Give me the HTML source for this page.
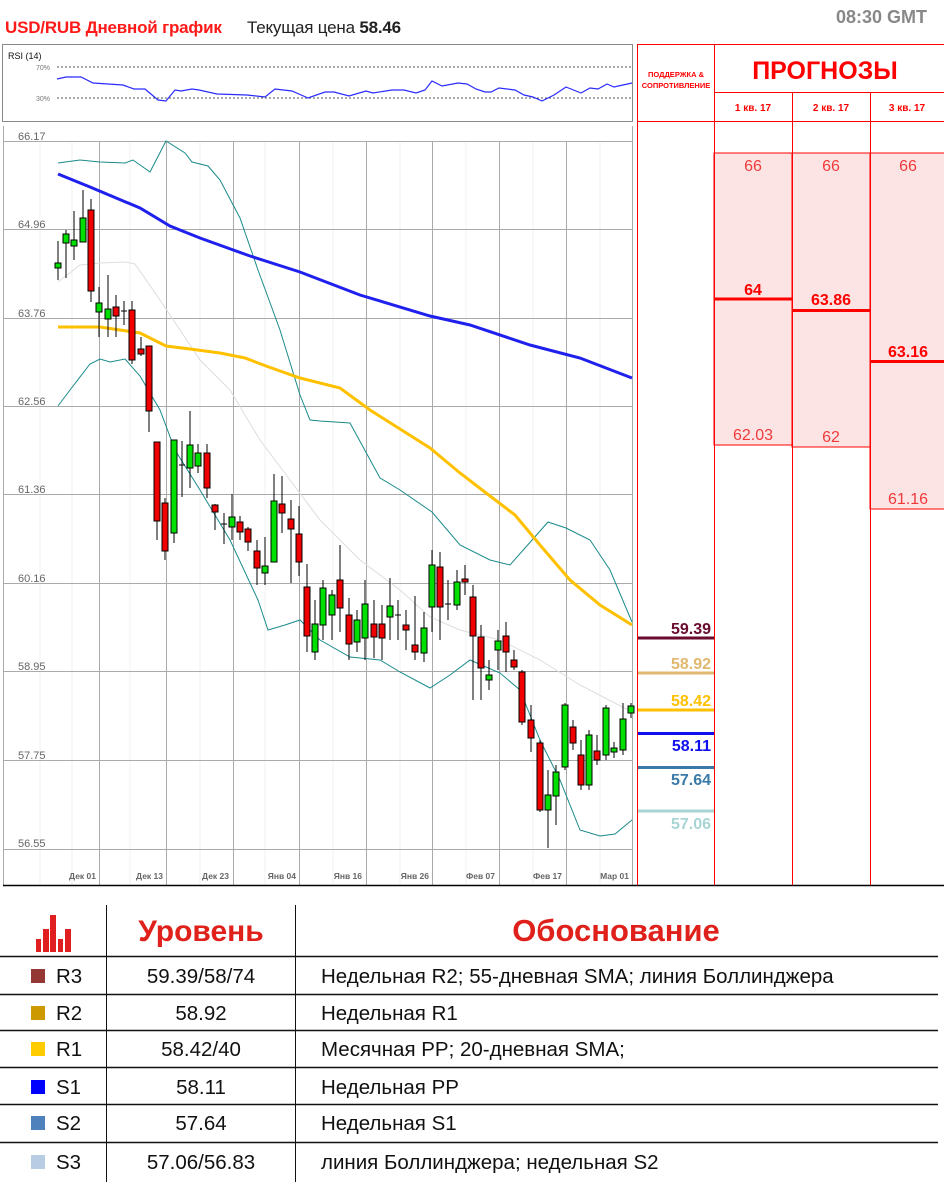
<!DOCTYPE html>
<html><head><meta charset="utf-8"><style>
body{margin:0;width:944px;height:1188px;background:#fff;position:relative;overflow:hidden;font-family:"Liberation Sans",sans-serif}
.a{position:absolute;white-space:nowrap}
</style></head><body>
<div class="a" style="left:5px;top:18px;font-size:17px;font-weight:bold;color:#ff1a1a;letter-spacing:-0.2px">USD/RUB Дневной график</div>
<div class="a" style="left:247px;top:18px;font-size:17px;color:#222;letter-spacing:-0.2px">Текущая цена <b>58.46</b></div>
<div class="a" style="left:836px;top:7px;font-size:18px;font-weight:bold;color:#888">08:30 GMT</div>

<svg class="a" style="left:0;top:0" width="944" height="1188" xmlns="http://www.w3.org/2000/svg">
<rect x="2.5" y="44.5" width="630" height="77" fill="none" stroke="#888"/>
<text x="8" y="59" font-size="9" font-family="Liberation Sans" fill="#111">RSI (14)</text>
<text x="36" y="70" font-size="7" font-family="Liberation Sans" fill="#777">70%</text>
<text x="36" y="101" font-size="7" font-family="Liberation Sans" fill="#777">30%</text>
<line x1="57" y1="67" x2="632" y2="67" stroke="#555" stroke-dasharray="2,2"/>
<line x1="57" y1="98" x2="632" y2="98" stroke="#555" stroke-dasharray="2,2"/>
<polyline fill="none" stroke="#2b2bff" stroke-width="1.2" points="57,79 66,77 81,77 93,83 123,85 134,89 145,89 158,100 166,101 175,90 181,91 192,89 199,90 217,94 247,95 265,97 275,89 292,91 308,98 325,92 334,92 349,96 366,91 373,93 392,90 404,90 416,93 425,90 432,81 442,86 458,83 467,84 476,89 485,92 491,92 499,88 515,90 524,95 533,97 542,101 554,95 566,87 581,93 590,88 598,89 607,84 614,87 623,85 632,83"/>

<g stroke="#f0f0f0"><line x1="40" y1="141" x2="40" y2="885"/><line x1="72" y1="141" x2="72" y2="885"/><line x1="130" y1="141" x2="130" y2="885"/><line x1="200" y1="141" x2="200" y2="885"/><line x1="265" y1="141" x2="265" y2="885"/><line x1="333" y1="141" x2="333" y2="885"/><line x1="400" y1="141" x2="400" y2="885"/><line x1="466" y1="141" x2="466" y2="885"/><line x1="533" y1="141" x2="533" y2="885"/><line x1="600" y1="141" x2="600" y2="885"/></g>
<g stroke="#aaa">
<line x1="3" y1="141.5" x2="632" y2="141.5"/><line x1="3" y1="229.5" x2="632" y2="229.5"/><line x1="3" y1="318.5" x2="632" y2="318.5"/><line x1="3" y1="406.5" x2="632" y2="406.5"/><line x1="3" y1="494.5" x2="632" y2="494.5"/><line x1="3" y1="583.5" x2="632" y2="583.5"/><line x1="3" y1="671.5" x2="632" y2="671.5"/><line x1="3" y1="760.5" x2="632" y2="760.5"/><line x1="3" y1="849.5" x2="632" y2="849.5"/>
<line x1="99.5" y1="141" x2="99.5" y2="885"/><line x1="166.5" y1="141" x2="166.5" y2="885"/><line x1="233.5" y1="141" x2="233.5" y2="885"/><line x1="299.5" y1="141" x2="299.5" y2="885"/><line x1="366.5" y1="141" x2="366.5" y2="885"/><line x1="432.5" y1="141" x2="432.5" y2="885"/><line x1="499.5" y1="141" x2="499.5" y2="885"/><line x1="566.5" y1="141" x2="566.5" y2="885"/><line x1="632.5" y1="126" x2="632.5" y2="885"/>
<line x1="3.5" y1="126" x2="3.5" y2="885"/>
</g>
<g font-size="11" font-family="Liberation Sans" fill="#666">
<text x="18" y="140">66.17</text><text x="18" y="228">64.96</text><text x="18" y="317">63.76</text><text x="18" y="405">62.56</text><text x="18" y="493">61.36</text><text x="18" y="582">60.16</text><text x="18" y="670">58.95</text><text x="18" y="759">57.75</text><text x="18" y="847">56.55</text>
</g>
<g font-size="8.5" font-family="Liberation Sans" font-weight="bold" fill="#666" text-anchor="end">
<text x="96" y="879">Дек 01</text><text x="163" y="879">Дек 13</text><text x="229" y="879">Дек 23</text><text x="296" y="879">Янв 04</text><text x="362" y="879">Янв 16</text><text x="429" y="879">Янв 26</text><text x="495" y="879">Фев 07</text><text x="562" y="879">Фев 17</text><text x="629" y="879">Мар 01</text>
</g>

<polyline fill="none" stroke="#ddd" stroke-width="1" points="58,282 80,265 100,263 125,262 135,264 160,300 180,330 200,360 230,390 260,440 290,480 320,520 360,560 400,590 430,617 460,630 500,640 540,660 580,685 632,712"/>
<polyline fill="none" stroke="#1a8a8a" stroke-width="1" points="58,163 80,160 100,162 125,163 133,160 150,172 166,141 185,153 192,162 208,166 220,180 240,218 258,270 280,330 300,395 310,420 320,421 350,423 380,478 400,490 432,512 460,545 490,560 510,565 525,548 548,522 566,528 590,540 610,570 632,622"/>
<polyline fill="none" stroke="#1a8a8a" stroke-width="1" points="58,406 70,390 90,364 100,359 110,362 125,359 140,376 160,410 175,450 200,490 230,540 258,600 268,630 285,625 300,620 320,640 350,657 380,660 400,672 430,688 450,675 470,660 500,673 520,690 540,740 560,780 580,830 600,836 615,834 632,820"/>
<polyline fill="none" stroke="#ffc000" stroke-width="3" points="58,327 100,327 140,333 166,346 190,349 220,353 245,358 266,366 300,378 340,388 370,410 400,429 430,448 460,473 490,496 515,515 540,545 570,580 600,605 632,625"/>
<polyline fill="none" stroke="#2020ee" stroke-width="3" points="58,174 90,187 140,208 170,226 200,238 250,256 300,272 360,295 430,316 470,325 530,345 580,358 632,378"/>

<g stroke="#000" stroke-width="1">
<line x1="58" y1="241" x2="58" y2="280"/><rect x="55" y="263" width="6" height="5" fill="#00e000"/>
<line x1="66" y1="230" x2="66" y2="278"/><rect x="63" y="234" width="6" height="9" fill="#00e000"/>
<line x1="74" y1="211" x2="74" y2="260"/><rect x="71" y="240" width="6" height="6" fill="#00e000"/>
<line x1="83" y1="190" x2="83" y2="242"/><rect x="80" y="218" width="6" height="24" fill="#00e000"/>
<line x1="91" y1="199" x2="91" y2="302"/><rect x="88" y="210" width="6" height="81" fill="#f00000"/>
<line x1="99" y1="287" x2="99" y2="337"/><rect x="96" y="303" width="6" height="9" fill="#00e000"/>
<line x1="108" y1="275" x2="108" y2="337"/><rect x="105" y="309" width="6" height="10" fill="#00e000"/>
<line x1="116" y1="295" x2="116" y2="337"/><rect x="113" y="307" width="6" height="9" fill="#f00000"/>
<line x1="124" y1="301" x2="124" y2="325"/><line x1="121" y1="311" x2="127" y2="311"/>
<line x1="132" y1="301" x2="132" y2="364"/><rect x="129" y="310" width="6" height="50" fill="#f00000"/>
<line x1="141" y1="337" x2="141" y2="356"/><rect x="138" y="349" width="6" height="5" fill="#f00000"/>
<line x1="149" y1="346" x2="149" y2="432"/><rect x="146" y="346" width="6" height="65" fill="#f00000"/>
<line x1="157" y1="442" x2="157" y2="540"/><rect x="154" y="442" width="6" height="79" fill="#f00000"/>
<line x1="165" y1="498" x2="165" y2="560"/><rect x="162" y="503" width="6" height="48" fill="#f00000"/>
<line x1="174" y1="440" x2="174" y2="543"/><rect x="171" y="440" width="6" height="93" fill="#00e000"/>
<line x1="182" y1="441" x2="182" y2="497"/><line x1="179" y1="465" x2="185" y2="465"/>
<line x1="190" y1="411" x2="190" y2="488"/><rect x="187" y="445" width="6" height="23" fill="#00e000"/>
<line x1="198" y1="444" x2="198" y2="473"/><rect x="195" y="453" width="6" height="13" fill="#00e000"/>
<line x1="207" y1="444" x2="207" y2="498"/><rect x="204" y="453" width="6" height="35" fill="#f00000"/>
<line x1="215" y1="504" x2="215" y2="530"/><rect x="212" y="505" width="6" height="7" fill="#f00000"/>
<line x1="224" y1="513" x2="224" y2="544"/><line x1="221" y1="524" x2="227" y2="524"/>
<line x1="232" y1="494" x2="232" y2="540"/><rect x="229" y="517" width="6" height="10" fill="#00e000"/>
<line x1="240" y1="516" x2="240" y2="540"/><rect x="237" y="522" width="6" height="10" fill="#f00000"/>
<line x1="248" y1="527" x2="248" y2="551"/><rect x="245" y="529" width="6" height="13" fill="#f00000"/>
<line x1="257" y1="540" x2="257" y2="585"/><rect x="254" y="551" width="6" height="17" fill="#f00000"/>
<line x1="265" y1="537" x2="265" y2="585"/><rect x="262" y="566" width="6" height="7" fill="#00e000"/>
<line x1="274" y1="474" x2="274" y2="562"/><rect x="271" y="501" width="6" height="61" fill="#00e000"/>
<line x1="282" y1="476" x2="282" y2="533"/><rect x="279" y="504" width="6" height="9" fill="#f00000"/>
<line x1="291" y1="500" x2="291" y2="583"/><rect x="288" y="519" width="6" height="10" fill="#f00000"/>
<line x1="299" y1="506" x2="299" y2="576"/><rect x="296" y="534" width="6" height="28" fill="#f00000"/>
<line x1="307" y1="564" x2="307" y2="652"/><rect x="304" y="587" width="6" height="49" fill="#f00000"/>
<line x1="315" y1="600" x2="315" y2="660"/><rect x="312" y="624" width="6" height="28" fill="#00e000"/>
<line x1="323" y1="580" x2="323" y2="640"/><rect x="320" y="588" width="6" height="37" fill="#00e000"/>
<line x1="332" y1="590" x2="332" y2="640"/><rect x="329" y="595" width="6" height="20" fill="#00e000"/>
<line x1="340" y1="545" x2="340" y2="632"/><rect x="337" y="580" width="6" height="28" fill="#f00000"/>
<line x1="349" y1="598" x2="349" y2="660"/><rect x="346" y="615" width="6" height="29" fill="#f00000"/>
<line x1="357" y1="610" x2="357" y2="652"/><rect x="354" y="620" width="6" height="22" fill="#00e000"/>
<line x1="365" y1="580" x2="365" y2="660"/><rect x="362" y="604" width="6" height="34" fill="#00e000"/>
<line x1="374" y1="600" x2="374" y2="658"/><rect x="371" y="624" width="6" height="13" fill="#f00000"/>
<line x1="382" y1="605" x2="382" y2="660"/><rect x="379" y="624" width="6" height="14" fill="#f00000"/>
<line x1="390" y1="578" x2="390" y2="640"/><rect x="387" y="606" width="6" height="11" fill="#00e000"/>
<line x1="398" y1="600" x2="398" y2="640"/><line x1="395" y1="615" x2="401" y2="615"/>
<line x1="406" y1="610" x2="406" y2="650"/><rect x="403" y="625" width="6" height="5" fill="#f00000"/>
<line x1="415" y1="596" x2="415" y2="660"/><rect x="412" y="645" width="6" height="7" fill="#f00000"/>
<line x1="424" y1="612" x2="424" y2="662"/><rect x="421" y="628" width="6" height="25" fill="#00e000"/>
<line x1="432" y1="550" x2="432" y2="632"/><rect x="429" y="565" width="6" height="42" fill="#00e000"/>
<line x1="440" y1="552" x2="440" y2="640"/><rect x="437" y="567" width="6" height="40" fill="#f00000"/>
<line x1="448" y1="580" x2="448" y2="620"/><line x1="445" y1="604" x2="451" y2="604"/>
<line x1="457" y1="570" x2="457" y2="610"/><rect x="454" y="582" width="6" height="23" fill="#00e000"/>
<line x1="465" y1="565" x2="465" y2="595"/><rect x="462" y="579" width="6" height="3" fill="#f00000"/>
<line x1="473" y1="585" x2="473" y2="700"/><rect x="470" y="597" width="6" height="39" fill="#f00000"/>
<line x1="481" y1="625" x2="481" y2="700"/><rect x="478" y="637" width="6" height="31" fill="#f00000"/>
<line x1="489" y1="660" x2="489" y2="690"/><rect x="486" y="675" width="6" height="5" fill="#00e000"/>
<line x1="498" y1="630" x2="498" y2="670"/><rect x="495" y="641" width="6" height="9" fill="#00e000"/>
<line x1="506" y1="622" x2="506" y2="672"/><rect x="503" y="636" width="6" height="16" fill="#f00000"/>
<line x1="514" y1="650" x2="514" y2="670"/><rect x="511" y="660" width="6" height="7" fill="#f00000"/>
<line x1="522" y1="670" x2="522" y2="725"/><rect x="519" y="672" width="6" height="50" fill="#f00000"/>
<line x1="531" y1="705" x2="531" y2="752"/><rect x="528" y="720" width="6" height="18" fill="#f00000"/>
<line x1="540" y1="740" x2="540" y2="812"/><rect x="537" y="743" width="6" height="67" fill="#f00000"/>
<line x1="548" y1="770" x2="548" y2="848"/><rect x="545" y="795" width="6" height="15" fill="#00e000"/>
<line x1="556" y1="765" x2="556" y2="825"/><rect x="553" y="772" width="6" height="24" fill="#00e000"/>
<line x1="565" y1="703" x2="565" y2="770"/><rect x="562" y="705" width="6" height="62" fill="#00e000"/>
<line x1="573" y1="720" x2="573" y2="750"/><rect x="570" y="727" width="6" height="16" fill="#f00000"/>
<line x1="581" y1="740" x2="581" y2="790"/><rect x="578" y="755" width="6" height="30" fill="#f00000"/>
<line x1="589" y1="730" x2="589" y2="790"/><rect x="586" y="735" width="6" height="50" fill="#00e000"/>
<line x1="597" y1="735" x2="597" y2="765"/><rect x="594" y="751" width="6" height="9" fill="#f00000"/>
<line x1="606" y1="705" x2="606" y2="760"/><rect x="603" y="708" width="6" height="47" fill="#00e000"/>
<line x1="614" y1="742" x2="614" y2="758"/><rect x="611" y="748" width="6" height="4" fill="#00e000"/>
<line x1="623" y1="703" x2="623" y2="755"/><rect x="620" y="719" width="6" height="31" fill="#00e000"/>
<line x1="631" y1="703" x2="631" y2="718"/><rect x="628" y="706" width="6" height="7" fill="#00e000"/>
</g>
<line x1="3" y1="885.5" x2="944" y2="885.5" stroke="#000" stroke-width="1.5"/>

<rect x="714" y="153" width="78" height="292" fill="#fde4e4" stroke="#f00" stroke-width="1"/>
<rect x="792" y="153" width="78" height="294" fill="#fde4e4" stroke="#f00" stroke-width="1"/>
<rect x="870" y="153" width="78" height="356" fill="#fde4e4" stroke="#f00" stroke-width="1"/>
<g stroke="#f00" stroke-width="1">
<line x1="637.5" y1="44" x2="637.5" y2="885"/><line x1="714.5" y1="44" x2="714.5" y2="885"/><line x1="792.5" y1="92" x2="792.5" y2="885"/><line x1="870.5" y1="92" x2="870.5" y2="885"/>
<line x1="637" y1="44.5" x2="944" y2="44.5"/><line x1="714" y1="92.5" x2="944" y2="92.5"/><line x1="637" y1="121.5" x2="944" y2="121.5"/>
</g>
<g font-family="Liberation Sans" fill="#f00" text-anchor="middle">
<text x="676" y="77" font-size="7.5" font-weight="bold">ПОДДЕРЖКА &amp;</text>
<text x="676" y="88" font-size="7.5" font-weight="bold">СОПРОТИВЛЕНИЕ</text>
<text x="825" y="79" font-size="25" font-weight="bold">ПРОГНОЗЫ</text>
<text x="753" y="111" font-size="10" font-weight="bold">1 кв. 17</text>
<text x="831" y="111" font-size="10" font-weight="bold">2 кв. 17</text>
<text x="907" y="111" font-size="10" font-weight="bold">3 кв. 17</text>
</g>
<g font-family="Liberation Sans" fill="#f03a3a" text-anchor="middle" font-size="16">
<text x="753" y="171">66</text><text x="831" y="171">66</text><text x="908" y="171">66</text>
<text x="753" y="440">62.03</text><text x="831" y="442">62</text><text x="908" y="504">61.16</text>
</g>
<g font-family="Liberation Sans" fill="#f00" text-anchor="middle" font-size="16" font-weight="bold">
<text x="753" y="295">64</text><text x="831" y="305">63.86</text><text x="908" y="357">63.16</text>
</g>
<g stroke="#f00" stroke-width="3">
<line x1="714" y1="299" x2="792" y2="299"/><line x1="792" y1="310.5" x2="870" y2="310.5"/><line x1="870" y1="361.5" x2="944" y2="361.5"/>
</g>
<g font-family="Liberation Sans" font-size="16" font-weight="bold" text-anchor="end">
<text x="711" y="634" fill="#6a0a2e">59.39</text>
<text x="711" y="669" fill="#e0b870">58.92</text>
<text x="711" y="706" fill="#ffc000">58.42</text>
<text x="711" y="751" fill="#1010ee">58.11</text>
<text x="711" y="785" fill="#3a7aa8">57.64</text>
<text x="711" y="829" fill="#a8d4d4">57.06</text>
</g>
<g stroke-width="3">
<line x1="638" y1="638" x2="714" y2="638" stroke="#6a0a2e"/>
<line x1="638" y1="673" x2="714" y2="673" stroke="#e0b870"/>
<line x1="638" y1="710" x2="714" y2="710" stroke="#ffc000"/>
<line x1="638" y1="733.5" x2="714" y2="733.5" stroke="#1010ee"/>
<line x1="638" y1="767.5" x2="714" y2="767.5" stroke="#3a7aa8"/>
<line x1="638" y1="811" x2="714" y2="811" stroke="#a8d4d4"/>
</g>

<g fill="#e02020">
<rect x="36" y="939" width="5" height="13"/><rect x="43" y="929" width="6" height="23"/><rect x="50" y="915" width="6" height="37"/><rect x="58" y="939" width="5" height="13"/><rect x="65" y="929" width="6" height="23"/>
</g>
<g stroke="#111">
<line x1="106.5" y1="905" x2="106.5" y2="1182"/><line x1="295.5" y1="905" x2="295.5" y2="1182"/>
</g>
<g stroke="#111" stroke-width="1.5">
<line x1="0" y1="956.5" x2="938" y2="956.5"/><line x1="0" y1="994.5" x2="938" y2="994.5"/><line x1="0" y1="1030.5" x2="938" y2="1030.5"/><line x1="0" y1="1067.5" x2="938" y2="1067.5"/><line x1="0" y1="1104.5" x2="938" y2="1104.5"/><line x1="0" y1="1142.5" x2="938" y2="1142.5"/>
</g>
<g font-family="Liberation Sans" font-weight="bold" fill="#e0201a" text-anchor="middle">
<text x="201" y="941" font-size="30">Уровень</text><text x="616" y="941" font-size="31">Обоснование</text>
</g>
<rect x="31" y="969" width="14" height="14" fill="#953735"/>
<rect x="31" y="1006" width="14" height="14" fill="#cc9900"/>
<rect x="31" y="1042" width="14" height="14" fill="#ffcc00"/>
<rect x="31" y="1080" width="14" height="14" fill="#0000ff"/>
<rect x="31" y="1116" width="14" height="14" fill="#4f81bd"/>
<rect x="31" y="1155" width="14" height="14" fill="#b8cce4"/>
<g font-family="Liberation Sans" font-size="20.5" fill="#111">
<text x="56" y="983">R3</text><text x="56" y="1020">R2</text><text x="56" y="1056">R1</text><text x="56" y="1094">S1</text><text x="56" y="1130">S2</text><text x="56" y="1169">S3</text>
<g text-anchor="middle">
<text x="201" y="983">59.39/58/74</text><text x="201" y="1020">58.92</text><text x="201" y="1056">58.42/40</text><text x="201" y="1094">58.11</text><text x="201" y="1130">57.64</text><text x="201" y="1169">57.06/56.83</text>
</g>
<text x="321" y="983">Недельная R2; 55-дневная SMA; линия Боллинджера</text>
<text x="321" y="1020">Недельная R1</text>
<text x="321" y="1056">Месячная PP; 20-дневная SMA;</text>
<text x="321" y="1094">Недельная PP</text>
<text x="321" y="1130">Недельная S1</text>
<text x="321" y="1169">линия Боллинджера; недельная S2</text>
</g>
</svg>
</body></html>
